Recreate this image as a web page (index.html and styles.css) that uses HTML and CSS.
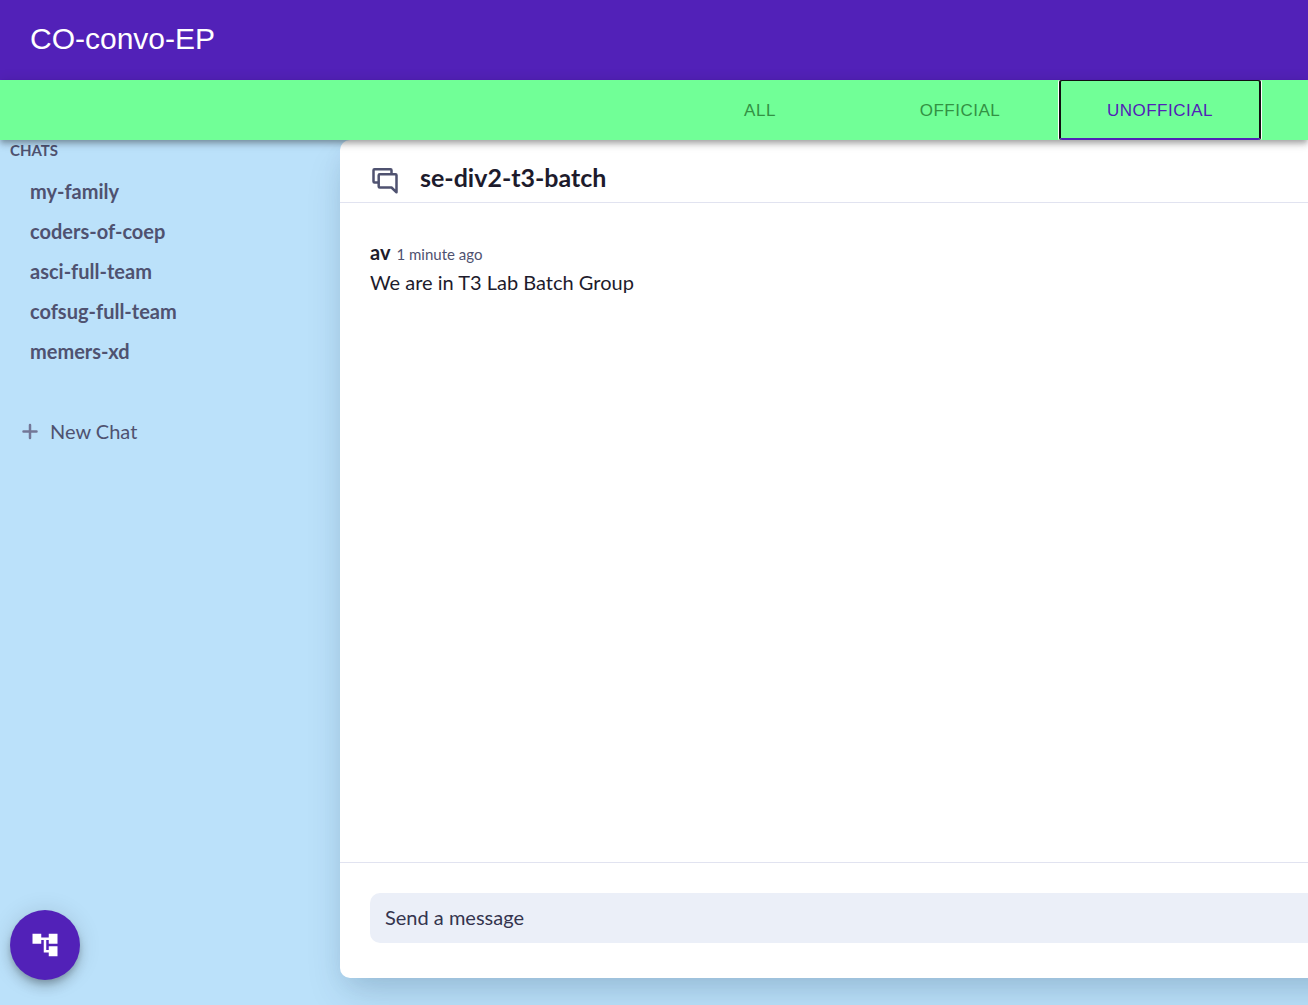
FILE: index.html
```html
<!DOCTYPE html>
<html lang="en">
<head>
<meta charset="utf-8">
<meta name="viewport" content="width=device-width, initial-scale=1">
<title>CO-convo-EP</title>
<link rel="stylesheet" href="styles.css">
</head>
<body>
<div class="app">
  <header class="app-header"><h1 class="brand">CO-convo-EP</h1></header>
  <nav class="tabs" role="tablist" aria-label="Chat type">
    <button class="tab" type="button" role="tab" aria-selected="false">ALL</button>
    <button class="tab" type="button" role="tab" aria-selected="false">OFFICIAL</button>
    <button class="tab tab-active" type="button" role="tab" aria-selected="true">UNOFFICIAL</button>
  </nav>
  <div class="workspace">
    <aside class="sidebar">
      <h2 class="sidebar-title">CHATS</h2>
      <ul class="chat-list">
        <li><a class="chat-link" href="#my-family">my-family</a></li>
        <li><a class="chat-link" href="#coders-of-coep">coders-of-coep</a></li>
        <li><a class="chat-link" href="#asci-full-team">asci-full-team</a></li>
        <li><a class="chat-link" href="#cofsug-full-team">cofsug-full-team</a></li>
        <li><a class="chat-link" href="#memers-xd">memers-xd</a></li>
      </ul>
      <button class="new-chat" type="button">
        <svg width="20" height="20" viewBox="0 0 20 20" aria-hidden="true"><path d="M10 4v13M3.500 10.500h13" fill="none" stroke="#737797" stroke-width="2.500" stroke-linecap="round"/></svg>
        New Chat
      </button>
    </aside>
    <main class="panel">
      <header class="panel-header">
        <svg width="30" height="30" viewBox="0 0 30 30" fill="none" stroke="#4f5270" stroke-width="2.500" stroke-linejoin="round" aria-hidden="true"><path d="M8 18.500H4.500Q3.500 18.500 3.500 17.500V6.200Q3.500 5.200 4.500 5.200H20.500Q21.500 5.200 21.500 6.200V9.700"/><path d="M9.700 10.200H25.500Q26.500 10.200 26.500 11.200V28.300L21.500 23.500H9.700Q8.700 23.500 8.700 22.500V11.200Q8.700 10.200 9.700 10.200Z"/></svg>
        <h2 class="panel-title">se-div2-t3-batch</h2>
      </header>
      <section class="messages">
        <article class="message">
          <header class="message-meta"><strong class="author">av</strong><time class="time">1 minute ago</time></header>
          <p class="message-text">We are in T3 Lab Batch Group</p>
        </article>
      </section>
      <form class="composer">
        <input class="composer-input" type="text" placeholder="Send a message" aria-label="Send a message">
      </form>
    </main>
  </div>
  <button class="fab" type="button" aria-label="Show chat tree">
    <svg width="30" height="30" viewBox="0 0 24 24" fill="#fff" aria-hidden="true"><path d="M22 11V3h-7v3H9V3H2v8h7V8h2v10h4v3h7v-8h-7v3h-2V8h2v3z"/></svg>
  </button>
</div>
</body>
</html>
```
FILE: styles.css
```css
* { box-sizing: border-box; }

body {
  margin: 0;
  background: #bbe1fa;
  color: #1d1b2c;
  font-family: Lato, "Liberation Sans", sans-serif;
  font-size: 20px;
  line-height: 28px;
}

h1, h2, p, ul { margin: 0; padding: 0; }

button, input { font: inherit; }

button { border: 0; background: none; cursor: pointer; }

.app {
  display: flex;
  flex-direction: column;
  min-height: 100vh;
  overflow: hidden;
}

.app-header {
  display: flex;
  align-items: center;
  height: 80px;
  padding: 0 30px 2px;
  background: #5221b8;
  color: #fff;
}

.brand {
  font-family: "Liberation Sans", Arial, sans-serif;
  font-size: 30px;
  font-weight: 400;
  line-height: 40px;
}

.tabs {
  position: relative;
  z-index: 1;
  display: flex;
  justify-content: flex-end;
  height: 60px;
  padding-right: 48px;
  background: #71ff97;
  box-shadow: 0 3px 5px -1px rgba(0, 0, 0, .2), 0 5px 6px rgba(0, 0, 0, .14), 0 1px 13px rgba(0, 0, 0, .12);
}

.tab {
  width: 200px;
  padding: 2px 0 0;
  color: #339144;
  font-family: "Liberation Sans", Arial, sans-serif;
  font-size: 17px;
  letter-spacing: .03em;
}

.tab-active {
  border-bottom: 2px solid #5221b8;
  padding-top: 4px;
  color: #5221b8;
  border-radius: 2px;
  box-shadow: inset 0 1px #101010, -1px 0 #101010, 1px 0 #101010, inset 1px 0 #101010, inset -1px 0 #101010, -2px 0 #fff, 2px 0 #fff;
}

.workspace {
  flex: 1;
  display: grid;
  grid-template-columns: 340px minmax(0, 1fr);
}

.sidebar { color: #4f5270; }

.sidebar-title {
  padding-left: 10px;
  font-size: 15px;
  line-height: 20px;
}

.chat-list { padding-top: 11px; list-style: none; }

.chat-link {
  display: block;
  padding-left: 30px;
  color: inherit;
  font-weight: 700;
  line-height: 40px;
  text-decoration: none;
}

.new-chat {
  display: flex;
  align-items: center;
  gap: 10px;
  height: 40px;
  margin-top: 40px;
  padding: 0 20px;
  color: inherit;
}

/* The panel runs past the window's right edge. */
.panel {
  display: flex;
  flex-direction: column;
  margin: 0 -60px 27px 0;
  border-radius: 10px;
  background: #fff;
  box-shadow: 0 20px 40px -6px rgba(20, 50, 80, .16), 0 8px 24px -6px rgba(20, 50, 80, .1);
}

.panel-header {
  display: flex;
  align-items: center;
  gap: 20px;
  height: 63px;
  padding: 16px 30px 0;
  border-bottom: 1px solid #e1e3f0;
}

.panel-title { padding-bottom: 4px; font-size: 25px; }

.messages { flex: 1; padding: 35px 30px; }

.message-meta { display: flex; align-items: baseline; gap: 6px; }

.time { color: #4f5270; font-size: 15px; }

.composer { padding: 30px 30px 35px; border-top: 1px solid #e1e3f0; }

.composer-input {
  display: block;
  width: 100%;
  height: 50px;
  padding: 0 15px 2px;
  border: 0;
  border-radius: 10px;
  background: #ebeff8;
  color: #34344e;
}

.composer-input::placeholder { color: #34344e; opacity: 1; }

.fab {
  position: fixed;
  bottom: 25px;
  left: 10px;
  display: grid;
  place-items: center;
  width: 70px;
  height: 70px;
  padding: 0;
  border-radius: 50%;
  background: #5221b8;
  box-shadow: 0 4px 6px -1px rgba(0, 0, 0, .2), 0 8px 13px rgba(0, 0, 0, .14), 0 1px 23px rgba(0, 0, 0, .12);
}
```
